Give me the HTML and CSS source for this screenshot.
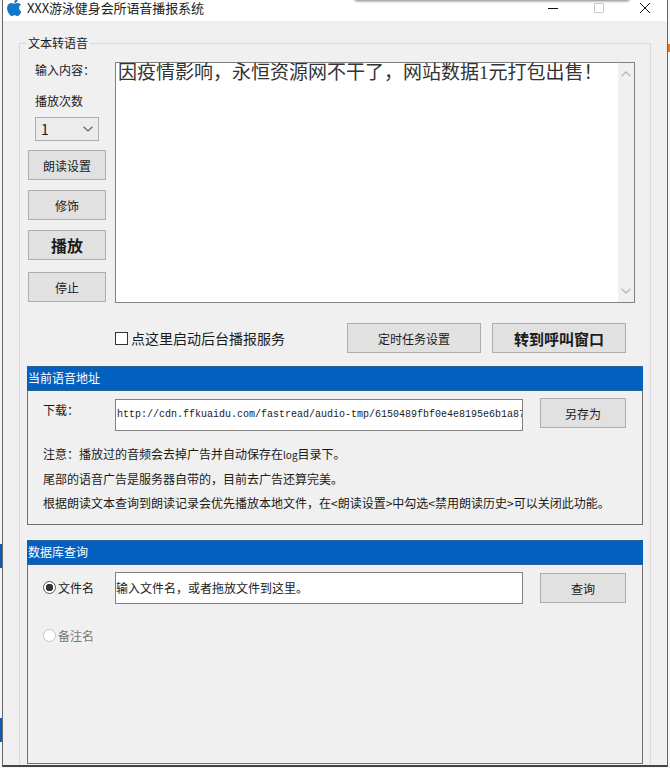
FILE: index.html
```html
<!DOCTYPE html>
<html lang="zh-CN">
<head>
<meta charset="utf-8">
<title>XXX游泳健身会所语音播报系统</title>
<link rel="stylesheet" href="styles.css">
</head>
<body>
<span class="desk desk-blue-a"></span>
<span class="desk desk-blue-b"></span>
<span class="desk desk-orange"></span>
<span class="desk desk-shadow"></span>
<main class="window">
  <header class="titlebar">
    <svg class="app-icon" viewBox="3.5 3 16.500 18" aria-hidden="true"><path d="M17.05 20.28c-.98.95-2.05.8-3.08.35-1.09-.46-2.09-.48-3.24 0-1.44.62-2.2.44-3.06-.35C2.79 15.25 3.51 7.59 9.05 7.31c1.35.07 2.29.74 3.08.8 1.18-.24 2.31-.93 3.57-.84 1.51.12 2.65.72 3.4 1.8-3.12 1.87-2.38 5.98.48 7.13-.57 1.5-1.31 2.99-2.54 4.09zM12.03 7.25c-.15-2.23 1.66-4.07 3.74-4.25.29 2.58-2.34 4.5-3.74 4.25z"/></svg>
    <span class="app-title">XXX游泳健身会所语音播报系统</span>
    <div class="controls">
      <svg class="ctl" viewBox="0 0 10 10" aria-hidden="true"><path d="M0 5.500h10" stroke="#111"/></svg>
      <svg class="ctl" viewBox="0 0 10 10" aria-hidden="true"><path d="M.5.5h9v9h-9z" stroke="#ccc" fill="none"/></svg>
      <svg class="ctl" viewBox="0 0 10 10" aria-hidden="true"><path d="M0 0l10 10M10 0L0 10" stroke="#111"/></svg>
    </div>
  </header>
  <div class="client">
    <fieldset class="group">
      <legend class="group-title">文本转语音</legend>
      <div class="tts-row">
        <div class="side">
          <div class="side-label label-input">输入内容&#xFF1A;</div>
          <div class="side-label label-count">播放次数</div>
          <div class="combo"><span>1</span>
            <svg class="chev" viewBox="0 0 10 6" aria-hidden="true"><path d="M.5.8L5 5l4.500-4.200" fill="none" stroke="#666" stroke-width="1.200"/></svg>
          </div>
          <button class="btn side-btn btn-first">朗读设置</button>
          <button class="btn side-btn">修饰</button>
          <button class="btn side-btn btn-play">播放</button>
          <button class="btn side-btn btn-stop">停止</button>
        </div>
        <div class="memo">
          <div class="memo-text">因疫情影响&#xFF0C;永恒资源网不干了&#xFF0C;网站数据1元打包出售&#xFF01;</div>
          <div class="scrollbar">
            <svg class="chev" viewBox="0 0 10 6" aria-hidden="true"><path d="M.5 5.200L5 1l4.500 4.200" fill="none" stroke="#bbb" stroke-width="1.500"/></svg>
            <svg class="chev" viewBox="0 0 10 6" aria-hidden="true"><path d="M.5.8L5 5l4.500-4.200" fill="none" stroke="#bbb" stroke-width="1.500"/></svg>
          </div>
        </div>
      </div>
      <div class="action-row">
        <label class="check"><span class="check-box"></span>点这里启动后台播报服务</label>
        <button class="btn btn-task">定时任务设置</button>
        <button class="btn btn-call">转到呼叫窗口</button>
      </div>
      <section class="panel panel-voice">
        <h2 class="panel-head">当前语音地址</h2>
        <div class="field-row field-row-url">
          <span class="field-label">下载&#xFF1A;</span>
          <div class="field field-url">http://cdn.ffkuaidu.com/fastread/audio-tmp/6150489fbf0e4e8195e6b1a87</div>
          <button class="btn btn-side-action btn-raised">另存为</button>
        </div>
        <div class="notes">
          <p>注意&#xFF1A;播放过的音频会去掉广告并自动保存在<span class="small">log</span>目录下。</p>
          <p>尾部的语音广告是服务器自带的&#xFF0C;目前去广告还算完美。</p>
          <p>根据朗读文本查询到朗读记录会优先播放本地文件&#xFF0C;在&lt;朗读设置&gt;中勾选&lt;禁用朗读历史&gt;可以关闭此功能。</p>
        </div>
      </section>
      <section class="panel panel-db">
        <h2 class="panel-head">数据库查询</h2>
        <div class="field-row field-row-db">
          <label class="radio"><span class="radio-dot is-on"></span>文件名</label>
          <div class="field">输入文件名&#xFF0C;或者拖放文件到这里。</div>
          <button class="btn btn-side-action btn-lowered">查询</button>
        </div>
        <label class="radio is-off"><span class="radio-dot"></span>备注名</label>
      </section>
    </fieldset>
  </div>
</main>
</body>
</html>
```

FILE: styles.css
```css
* { box-sizing: border-box; }
html, body { margin: 0; height: 100%; }
body {
  position: relative;
  width: 670px;
  height: 768px;
  overflow: hidden;
  background: #f3f5f8;
  font-family: "Noto Sans CJK SC", "Liberation Sans", sans-serif;
  font-size: 12px;
  color: #1a1a1a;
}
.desk { position: absolute; display: block; }
.desk-blue-a { left: 0; top: 544px; width: 2px; height: 24px; background: #0b5fb5; }
.desk-blue-b { left: 0; top: 718px; width: 2px; height: 24px; background: #0b5fb5; }
.desk-orange { left: 668px; top: 44px; width: 2px; height: 8px; background: #e8791e; }
.desk-shadow { left: 355px; top: -3px; width: 274px; height: 3px; box-shadow: 0 1px 3px rgba(0,0,0,.55); z-index: 2; }

.window {
  margin-left: 2px;
  width: 666px;
  height: 767px;
  display: flex;
  flex-direction: column;
  border-left: 1px solid #666;
  border-right: 1px solid #666;
  border-bottom: 2px solid #444;
  background: #f0f0f0;
}
.titlebar {
  flex: none;
  height: 21px;
  background: #fff;
  display: flex;
  align-items: flex-start;
}
.app-icon { flex: none; width: 16px; height: 17px; margin: -1px 0 0 3px; fill: #1478c8; }
.app-title { margin-left: 5px; font-size: 13px; line-height: 15px; color: #222; letter-spacing: -.1px; }
.controls { margin-left: auto; display: flex; gap: 36px; padding: 3px 17px 0 0; }
.ctl { width: 10px; height: 10px; display: block; }

.client { flex: 1; min-height: 0; padding: 13px 16px 0 16px; }
.group {
  margin: 0;
  min-width: 0;
  height: 100%;
  padding: 10px 6px 0 7px;
  border: 1px solid #d9d9d9;
  border-bottom: 0;
}
.group-title { padding: 0 2px 0 1px; margin-left: 0; font-size: 12px; line-height: 18px; }

.tts-row { display: flex; align-items: flex-start; }
.side { flex: none; width: 87px; margin-left: 1px; display: flex; flex-direction: column; align-items: flex-start; }
.side-label { margin-left: 7px; line-height: 17px; }
.label-input { margin-top: -1px; }
.label-count { margin-top: 14px; }
.combo {
  margin: 8px 0 0 7px;
  width: 64px;
  height: 24px;
  padding: 0 5px;
  display: flex;
  align-items: center;
  justify-content: space-between;
  background: #ececec;
  border: 1px solid #acacac;
  font-size: 14px;
}
.combo .chev { width: 10px; height: 6px; }
.btn {
  display: block;
  margin: 0;
  padding: 0;
  height: 30px;
  font: inherit;
  color: inherit;
  background: #e1e1e1;
  border: 1px solid #adadad;
}
.side-btn { width: 78px; margin-top: 10px; }
.btn-first { margin-top: 9px; }
.btn-play { font-size: 16px; font-weight: 700; }
.btn-stop { margin-top: 12px; }

.memo {
  flex: none;
  width: 520px;
  height: 241px;
  display: flex;
  background: #fff;
  border: 1px solid #808080;
}
.memo-text {
  flex: 1;
  padding: 0 2px;
  font-family: "Liberation Serif", "Noto Sans CJK SC", serif;
  font-size: 19px;
  line-height: 20px;
  color: #333;
}
.scrollbar {
  flex: none;
  width: 16px;
  padding: 8px 3px;
  display: flex;
  flex-direction: column;
  justify-content: space-between;
  background: #f0f0f0;
}
.chev { display: block; width: 10px; height: 6px; }

.action-row { display: flex; align-items: center; margin-top: 20px; height: 30px; }
.check { display: flex; align-items: center; margin-left: 88px; width: 232px; font-size: 14px; }
.check-box { width: 13px; height: 13px; margin-right: 3px; background: #fff; border: 1px solid #333; }
.btn-task { width: 134px; }
.btn-call { width: 134px; margin-left: 11px; font-size: 15px; font-weight: 700; }

.panel { border: 1px solid #707070; width: 616px; }
.panel-voice { margin-top: 13px; height: 159px; }
.panel-db { margin-top: 15px; height: 224px; }
.panel-head {
  margin: -1px -1px 0;
  height: 25px;
  padding-left: 1px;
  background: #0460be;
  border: 1px solid #2e5f95;
  border-width: 1px 0;
  font-size: 12px;
  font-weight: 400;
  line-height: 21px;
  color: #fff;
}
.field-row { display: flex; align-items: flex-start; }
.field-row-url { margin-top: 8px; }
.field-row-db { margin-top: 7px; }
.field-label { width: 87px; padding-left: 15px; margin-top: 2px; line-height: 17px; }
.field {
  flex: none;
  width: 408px;
  height: 32px;
  padding: 0;
  background: #fff;
  border: 1px solid #808080;
  line-height: 29px;
  white-space: nowrap;
  overflow: hidden;
}
.field-url { padding-left: 1px; font-family: "Liberation Mono", monospace; font-size: 10px; }
.btn-side-action { width: 86px; margin: 0 0 0 17px; }
.btn-raised { margin-top: -1px; }
.btn-lowered { margin-top: 1px; }
.notes { margin: 11px 0 0 15px; }
.notes p { margin: 0; line-height: 24px; white-space: nowrap; }
.small { font-size: 10px; }

.radio { display: flex; align-items: center; width: 87px; padding-left: 15px; line-height: 17px; }
.field-row-db .radio { margin-top: 7px; }
.radio-dot {
  flex: none;
  width: 13px;
  height: 13px;
  margin-right: 2px;
  border: 1px solid #555;
  border-radius: 50%;
  background: #fff;
}
.radio-dot.is-on { background: radial-gradient(circle, #333 0 3.500px, #fff 4px); }
.radio.is-off { margin-top: 23px; color: #777; }
.radio.is-off .radio-dot { border-color: #c4c4c4; }
```
